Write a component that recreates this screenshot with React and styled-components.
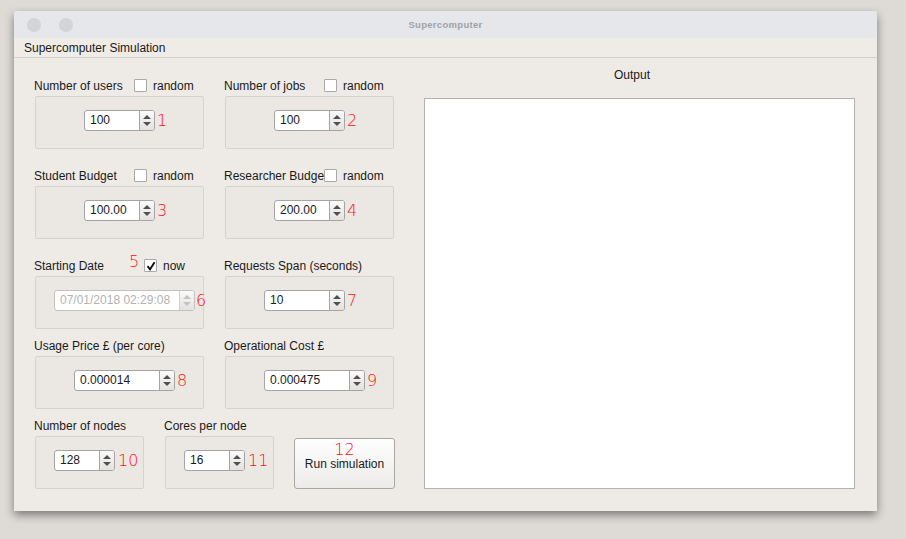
import React from "react";
import styled, { createGlobalStyle } from "styled-components";

const GlobalStyle = createGlobalStyle`
  html, body {
    margin: 0;
    padding: 0;
    background: #dedbd7;
    font-family: "Liberation Sans", Arial, sans-serif;
    font-size: 12px;
    color: #1a1a1a;
  }
`;

const Desktop = styled.div`
  width: 906px;
  height: 539px;
  padding: 11px 0 0 14px;
  box-sizing: border-box;
`;

const Window = styled.div`
  width: 863px;
  height: 500px;
  background: #eeebe7;
  box-shadow: 0 4px 10px rgba(0, 0, 0, 0.45);
  display: flex;
  flex-direction: column;
  border-radius: 3px 3px 0 0;
`;

const TitleBar = styled.div`
  height: 27px;
  background: #e6e7eb;
  display: flex;
  align-items: center;
  position: relative;
  padding-left: 13px;
  gap: 18px;
  border-radius: 3px 3px 0 0;
`;

const Light = styled.span`
  width: 14px;
  height: 14px;
  border-radius: 50%;
  background: #d4d4d6;
`;

const Title = styled.div`
  position: absolute;
  left: 0;
  right: 0;
  text-align: center;
  font-size: 9.5px;
  font-weight: bold;
  color: #9ea2aa;
  letter-spacing: 0.3px;
  pointer-events: none;
`;

const MenuBar = styled.div`
  height: 19px;
  background: #efece8;
  border-bottom: 1px solid #d3d0cc;
  display: flex;
  align-items: center;
  padding-left: 10px;
`;

const Body = styled.div`
  flex: 1;
  display: flex;
  padding: 0 22px 0 20px;
`;

const LeftPanel = styled.div`
  width: 390px;
  padding-top: 19px;
  display: flex;
  flex-direction: column;
`;

const Row = styled.div`
  display: flex;
  gap: 20px;
  margin-top: ${(p) => p.$gap || 0}px;
  align-items: flex-end;
`;

const Field = styled.div`
  width: ${(p) => p.$w || 170}px;
  display: flex;
  flex-direction: column;
`;

const LabelRow = styled.div`
  height: 17px;
  padding-bottom: 2px;
  display: flex;
  align-items: center;
  position: relative;
`;

const LabelText = styled.span`
  width: ${(p) => (p.$w ? p.$w + "px" : "auto")};
  white-space: nowrap;
  overflow: hidden;
  flex-shrink: 0;
`;

const Check = styled.span`
  width: 13px;
  height: 13px;
  box-sizing: border-box;
  background: #fff;
  border: 1px solid #a9a9a9;
  border-radius: 1px;
  display: inline-flex;
  align-items: center;
  justify-content: center;
  margin-right: 6px;
  flex-shrink: 0;
`;

const GroupBox = styled.div`
  height: 53px;
  margin-left: 1px;
  box-sizing: border-box;
  border: 1px solid #d6d3cf;
  border-radius: 2px;
  background: #ebe8e4;
  display: flex;
  align-items: center;
  padding-left: ${(p) => p.$pad}px;
  padding-bottom: 5px;
`;

const Spin = styled.div`
  position: relative;
  width: ${(p) => p.$w}px;
  height: 21px;
  box-sizing: border-box;
  border: 1px solid ${(p) => (p.$disabled ? "#c4c2bf" : "#a4a4a4")};
  border-radius: 3px;
  background: #fff;
  display: flex;
`;

const SpinValue = styled.div`
  flex: 1;
  display: flex;
  align-items: center;
  padding-left: 5px;
  color: ${(p) => (p.$disabled ? "#b4b2b0" : "#1a1a1a")};
`;

const SpinButtons = styled.div`
  width: 14px;
  border-left: 1px solid ${(p) => (p.$disabled ? "#d0cecb" : "#a4a4a4")};
  background: linear-gradient(#fafafa, #e4e2df);
  border-radius: 0 2px 2px 0;
  display: flex;
  flex-direction: column;
  align-items: center;
  justify-content: center;
  gap: 3px;
`;

const Arrow = styled.span`
  width: 0;
  height: 0;
  border-left: 4px solid transparent;
  border-right: 4px solid transparent;
  ${(p) =>
    p.$down
      ? `border-top: 4px solid ${p.$c};`
      : `border-bottom: 4px solid ${p.$c};`}
`;

const noteFont = `
  color: #ff0f0f;
  font-family: "DejaVu Sans", "Liberation Sans", sans-serif;
  font-weight: 200;
  font-size: 16px;
  line-height: 16px;
`;

const Note = styled.span`
  position: absolute;
  left: calc(100% + ${(p) => p.$dx || 3}px);
  top: 2px;
  white-space: nowrap;
  ${noteFont}
`;

const InlineNote = styled.span`
  position: absolute;
  left: ${(p) => p.$x}px;
  top: ${(p) => p.$y}px;
  ${noteFont}
`;

const RunButton = styled.button`
  width: 101px;
  height: 51px;
  box-sizing: border-box;
  border: 1px solid #a9a7a4;
  border-radius: 3px;
  background: linear-gradient(#fefefe, #ecebe9);
  font-family: inherit;
  font-size: 12px;
  color: #1a1a1a;
  position: relative;
  padding: 1px 0 0 0;
`;

const ButtonNote = styled.span`
  position: absolute;
  top: 3px;
  left: 0;
  right: 0;
  text-align: center;
  ${noteFont}
`;

const OutputPanel = styled.div`
  flex: 1;
  display: flex;
  flex-direction: column;
`;

const OutputLabel = styled.div`
  height: 40px;
  box-sizing: border-box;
  padding: 10px 15px 0 0;
  text-align: center;
`;

const OutputBox = styled.div`
  height: 391px;
  background: #fff;
  border: 1px solid #b4b2b0;
  box-sizing: border-box;
`;

const SpinBox = ({ value, width, note, disabled, noteDx }) => {
  const c = disabled ? "#c4c2bf" : "#505050";
  return (
    <Spin $w={width} $disabled={disabled}>
      <SpinValue $disabled={disabled}>{value}</SpinValue>
      <SpinButtons $disabled={disabled}>
        <Arrow $c={c} />
        <Arrow $c={c} $down />
      </SpinButtons>
      {note && <Note $dx={noteDx}>{note}</Note>}
    </Spin>
  );
};

const Tick = () => (
  <svg width="10" height="10" viewBox="0 0 10 10">
    <path d="M1.5 5.2 L4 8.3 L8.6 1.2" fill="none" stroke="#111" strokeWidth="1.9" />
  </svg>
);

const App = () => (
  <>
    <GlobalStyle />
    <Desktop>
      <Window>
        <TitleBar>
          <Light />
          <Light />
          <Title>Supercomputer</Title>
        </TitleBar>
        <MenuBar>Supercomputer Simulation</MenuBar>
        <Body>
          <LeftPanel>
            <Row>
              <Field>
                <LabelRow>
                  <LabelText $w={100}>Number of users</LabelText>
                  <Check />
                  random
                </LabelRow>
                <GroupBox $pad={48}>
                  <SpinBox value="100" width={71} note="1" />
                </GroupBox>
              </Field>
              <Field>
                <LabelRow>
                  <LabelText $w={100}>Number of jobs</LabelText>
                  <Check />
                  random
                </LabelRow>
                <GroupBox $pad={48}>
                  <SpinBox value="100" width={71} note="2" />
                </GroupBox>
              </Field>
            </Row>
            <Row $gap={18}>
              <Field>
                <LabelRow>
                  <LabelText $w={100}>Student Budget</LabelText>
                  <Check />
                  random
                </LabelRow>
                <GroupBox $pad={48}>
                  <SpinBox value="100.00" width={71} note="3" />
                </GroupBox>
              </Field>
              <Field>
                <LabelRow>
                  <LabelText $w={100}>Researcher Budget</LabelText>
                  <Check />
                  random
                </LabelRow>
                <GroupBox $pad={48}>
                  <SpinBox value="200.00" width={71} note="4" />
                </GroupBox>
              </Field>
            </Row>
            <Row $gap={18}>
              <Field>
                <LabelRow>
                  <LabelText $w={110}>Starting Date</LabelText>
                  <InlineNote $x={95} $y={-3}>5</InlineNote>
                  <Check>
                    <Tick />
                  </Check>
                  now
                </LabelRow>
                <GroupBox $pad={18}>
                  <SpinBox value="07/01/2018 02:29:08" width={141} note="6" disabled noteDx={2} />
                </GroupBox>
              </Field>
              <Field>
                <LabelRow>
                  <LabelText>Requests Span (seconds)</LabelText>
                </LabelRow>
                <GroupBox $pad={38}>
                  <SpinBox value="10" width={81} note="7" />
                </GroupBox>
              </Field>
            </Row>
            <Row $gap={8}>
              <Field>
                <LabelRow>
                  <LabelText>Usage Price £ (per core)</LabelText>
                </LabelRow>
                <GroupBox $pad={38}>
                  <SpinBox value="0.000014" width={101} note="8" />
                </GroupBox>
              </Field>
              <Field>
                <LabelRow>
                  <LabelText>Operational Cost £</LabelText>
                </LabelRow>
                <GroupBox $pad={38}>
                  <SpinBox value="0.000475" width={101} note="9" />
                </GroupBox>
              </Field>
            </Row>
            <Row $gap={8}>
              <Field $w={110}>
                <LabelRow>
                  <LabelText>Number of nodes</LabelText>
                </LabelRow>
                <GroupBox $pad={18}>
                  <SpinBox value="128" width={61} note="10" noteDx={4} />
                </GroupBox>
              </Field>
              <Field $w={110}>
                <LabelRow>
                  <LabelText>Cores per node</LabelText>
                </LabelRow>
                <GroupBox $pad={18}>
                  <SpinBox value="16" width={61} note="11" noteDx={4} />
                </GroupBox>
              </Field>
              <RunButton>
                <ButtonNote>12</ButtonNote>
                Run simulation
              </RunButton>
            </Row>
          </LeftPanel>
          <OutputPanel>
            <OutputLabel>Output</OutputLabel>
            <OutputBox />
          </OutputPanel>
        </Body>
      </Window>
    </Desktop>
  </>
);

export default App;
